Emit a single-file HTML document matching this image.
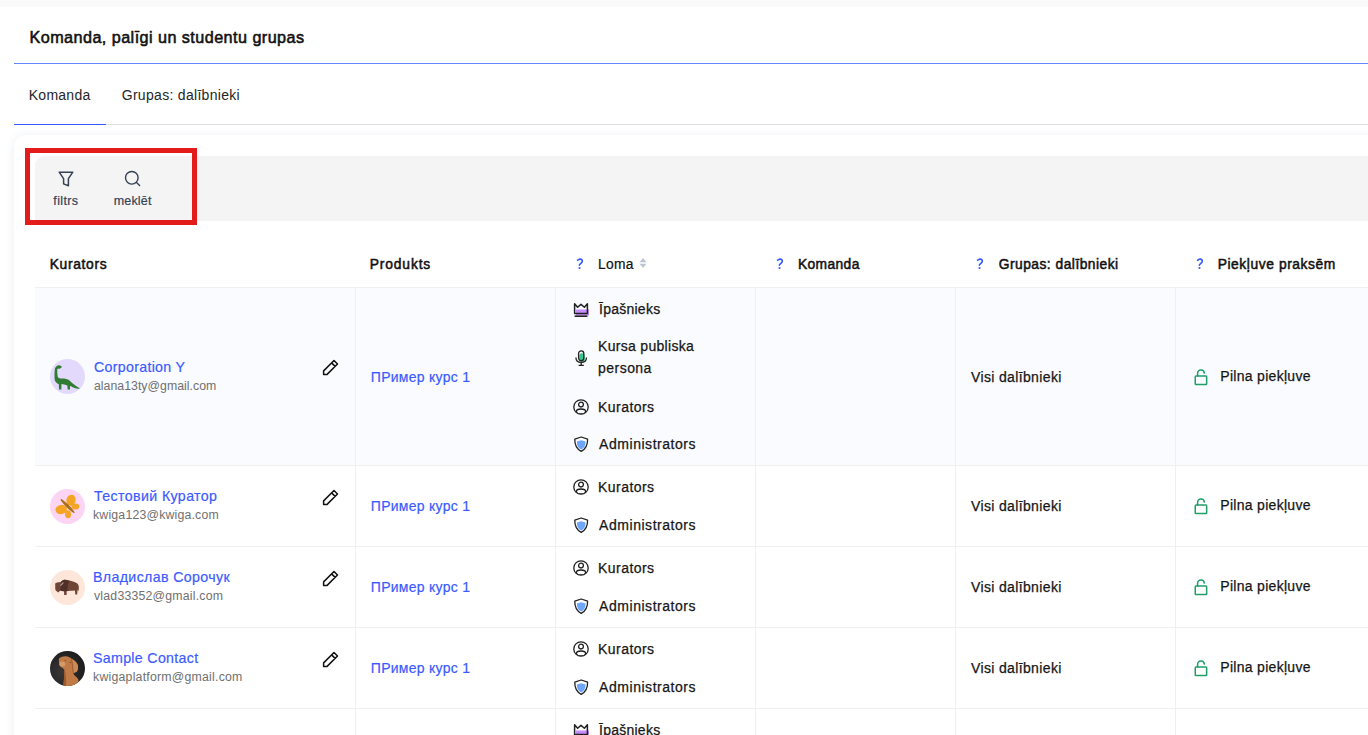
<!DOCTYPE html>
<html><head><meta charset="utf-8"><style>
html,body{margin:0;padding:0;}
body{width:1368px;height:735px;overflow:hidden;position:relative;background:#fff;font-family:"Liberation Sans",sans-serif;}
.t{position:absolute;white-space:nowrap;}
.r{position:absolute;}
.i{position:absolute;overflow:visible;}
.card{position:absolute;left:14px;top:135px;width:1400px;height:700px;border-radius:12px;background:#fff;box-shadow:0 1px 10px rgba(190,200,220,0.32);}
.toolbar{position:absolute;left:35px;top:156px;width:1400px;height:65px;border-radius:9px 0 0 0;background:#f4f4f4;}
</style></head><body>
<div class="r" style="left:0px;top:0px;width:1368px;height:7px;background:#fafafa"></div>
<div class="t" style="left:29.5px;top:26.60px;font-size:16.2px;line-height:20px;color:#111;font-weight:400;letter-spacing:0.439px;-webkit-text-stroke:0.55px #111;">Komanda, palīgi un studentu grupas</div>
<div class="r" style="left:14px;top:63px;width:1354px;height:1px;background:#6486ff"></div>
<div class="t" style="left:28.75px;top:86.20px;font-size:14px;line-height:18px;color:#262626;font-weight:400;letter-spacing:0.258px;">Komanda</div>
<div class="t" style="left:121.7px;top:86.20px;font-size:14px;line-height:18px;color:#262626;font-weight:400;letter-spacing:0.306px;">Grupas: dalībnieki</div>
<div class="r" style="left:14px;top:124px;width:1354px;height:1px;background:#dedede"></div>
<div class="r" style="left:14px;top:124px;width:92px;height:1px;background:#3358ff"></div>
<div class="card"></div>
<div class="toolbar"></div>
<svg class="i" style="left:56px;top:169px;" width="20" height="20" viewBox="0 0 20 20"><path d="M3.2 3.2 H16.8 L12.4 9.6 V16.8 L7.6 14.9 V9.6 Z" fill="none" stroke="#364152" stroke-width="1.5" stroke-linejoin="round"/></svg>
<div class="t" style="left:53.3px;top:192.50px;font-size:12.5px;line-height:16px;color:#364356;font-weight:400;letter-spacing:0.38px;-webkit-text-stroke:0.2px #364356;">filtrs</div>
<svg class="i" style="left:122px;top:168px;" width="20" height="20" viewBox="0 0 20 20"><circle cx="9.8" cy="9.8" r="6.3" fill="none" stroke="#364152" stroke-width="1.4"/><path d="M14.5 14.6 L17.6 17.6" stroke="#364152" stroke-width="1.4" stroke-linecap="round"/></svg>
<div class="t" style="left:113.7px;top:192.50px;font-size:12.5px;line-height:16px;color:#364356;font-weight:400;letter-spacing:0.18px;-webkit-text-stroke:0.2px #364356;">meklēt</div>
<div class="r" style="left:25px;top:148px;width:172px;height:77px;border:5px solid #e31b1b;box-sizing:border-box"></div>
<div class="t" style="left:49.7px;top:255.80px;font-size:13.8px;line-height:17px;color:#111;font-weight:400;letter-spacing:0.686px;-webkit-text-stroke:0.5px #111;">Kurators</div>
<div class="t" style="left:369.8px;top:255.80px;font-size:13.8px;line-height:17px;color:#111;font-weight:400;letter-spacing:0.857px;-webkit-text-stroke:0.5px #111;">Produkts</div>
<svg class="i" style="left:573.5px;top:256px;" width="14" height="15" viewBox="0 0 14 15"><path d="M3.6 4.4 C4.2 3.4 5 3.1 6 3.1 C7.4 3.1 8.3 4 8.3 5.2 C8.3 6.6 6.8 7.4 6 8.2 C5.6 8.6 5.4 9 5.4 9.3" fill="none" stroke="#3358ff" stroke-width="1.6" stroke-linecap="round"/><circle cx="5.5" cy="12" r="1.05" fill="#3358ff"/></svg>
<div class="t" style="left:598.0px;top:255.80px;font-size:13.8px;line-height:17px;color:#111;font-weight:400;letter-spacing:0.267px;-webkit-text-stroke:0.2px #111;">Loma</div>
<svg class="i" style="left:638px;top:256px;" width="10" height="14" viewBox="0 0 10 14"><path d="M5 2 L8.5 6.3 H1.5 Z" fill="#bcc5d4"/><path d="M5 12 L8.5 7.7 H1.5 Z" fill="#bcc5d4"/></svg>
<svg class="i" style="left:773.5px;top:256px;" width="14" height="15" viewBox="0 0 14 15"><path d="M3.6 4.4 C4.2 3.4 5 3.1 6 3.1 C7.4 3.1 8.3 4 8.3 5.2 C8.3 6.6 6.8 7.4 6 8.2 C5.6 8.6 5.4 9 5.4 9.3" fill="none" stroke="#3358ff" stroke-width="1.6" stroke-linecap="round"/><circle cx="5.5" cy="12" r="1.05" fill="#3358ff"/></svg>
<div class="t" style="left:797.9px;top:255.80px;font-size:13.8px;line-height:17px;color:#111;font-weight:400;letter-spacing:0.4px;-webkit-text-stroke:0.5px #111;">Komanda</div>
<svg class="i" style="left:973.6999999999999px;top:256px;" width="14" height="15" viewBox="0 0 14 15"><path d="M3.6 4.4 C4.2 3.4 5 3.1 6 3.1 C7.4 3.1 8.3 4 8.3 5.2 C8.3 6.6 6.8 7.4 6 8.2 C5.6 8.6 5.4 9 5.4 9.3" fill="none" stroke="#3358ff" stroke-width="1.6" stroke-linecap="round"/><circle cx="5.5" cy="12" r="1.05" fill="#3358ff"/></svg>
<div class="t" style="left:998.7px;top:255.80px;font-size:13.8px;line-height:17px;color:#111;font-weight:400;letter-spacing:0.488px;-webkit-text-stroke:0.5px #111;">Grupas: dalībnieki</div>
<svg class="i" style="left:1193.7px;top:256px;" width="14" height="15" viewBox="0 0 14 15"><path d="M3.6 4.4 C4.2 3.4 5 3.1 6 3.1 C7.4 3.1 8.3 4 8.3 5.2 C8.3 6.6 6.8 7.4 6 8.2 C5.6 8.6 5.4 9 5.4 9.3" fill="none" stroke="#3358ff" stroke-width="1.6" stroke-linecap="round"/><circle cx="5.5" cy="12" r="1.05" fill="#3358ff"/></svg>
<div class="t" style="left:1217.7px;top:255.80px;font-size:13.8px;line-height:17px;color:#111;font-weight:400;letter-spacing:0.58px;-webkit-text-stroke:0.5px #111;">Piekļuve praksēm</div>
<div class="r" style="left:35px;top:287px;width:1333px;height:1px;background:#f0f0f0"></div>
<div class="r" style="left:35px;top:288px;width:1333px;height:177px;background:#fafbfe"></div>
<div class="r" style="left:35px;top:465px;width:1333px;height:1px;background:#f0f0f0"></div>
<div class="r" style="left:35px;top:546px;width:1333px;height:1px;background:#f0f0f0"></div>
<div class="r" style="left:35px;top:627px;width:1333px;height:1px;background:#f0f0f0"></div>
<div class="r" style="left:35px;top:708px;width:1333px;height:1px;background:#f0f0f0"></div>
<div class="r" style="left:35px;top:900px;width:1333px;height:1px;background:#f0f0f0"></div>
<div class="r" style="left:355px;top:288px;width:1px;height:447px;background:#f0f0f0"></div>
<div class="r" style="left:555px;top:288px;width:1px;height:447px;background:#f0f0f0"></div>
<div class="r" style="left:755px;top:288px;width:1px;height:447px;background:#f0f0f0"></div>
<div class="r" style="left:955px;top:288px;width:1px;height:447px;background:#f0f0f0"></div>
<div class="r" style="left:1175px;top:288px;width:1px;height:447px;background:#f0f0f0"></div>
<svg class="i" style="left:50px;top:359.0px;" width="35" height="35" viewBox="0 0 35 35"><circle cx="17.5" cy="17.5" r="17.5" fill="#e3d9fd"/><path d="M8 6.5 C9 5.8 10.3 6.2 10.8 7 L11.8 7.6 L11.5 8.4 C10.8 9.3 9.5 9.6 8 9.8 L7.3 10 C7.2 13 7.4 16 7.8 18 C8.5 19.3 10 19.6 12 19.6 C15 19.6 17.5 20.2 19.5 21.6 C22.5 24.5 26 27.5 30.2 29.5 C27 30 24 29.2 21 27.2 L20 27 L20 30.5 L17.6 30.5 L17.4 26.6 C15.5 25.8 13 25.2 11.4 25 L11.4 30.5 L9 30.5 L8.8 25.3 C6.2 24 4.8 22.5 4.6 20 C4.4 16 4.5 12.5 4.9 9.6 C5.5 7.8 6.8 6.8 8 6.5 Z" fill="#2e7d32"/></svg>
<div class="t" style="left:94.0px;top:357.90px;font-size:14.2px;line-height:18px;color:#3b5bff;font-weight:400;letter-spacing:0.308px;-webkit-text-stroke:0.2px #3b5bff;">Corporation Y</div>
<div class="t" style="left:94.0px;top:378.50px;font-size:12.3px;line-height:15px;color:#707070;font-weight:400;letter-spacing:0.022px;">alana13ty@gmail.com</div>
<svg class="i" style="left:320px;top:357.0px;" width="20" height="20" viewBox="0 0 20 20"><path d="M3.6 17.4 V13.9 L14 3.5 L17.5 7 L7.1 17.4 Z M11.6 5.9 L15.1 9.4" fill="none" stroke="#111" stroke-width="1.5" stroke-linejoin="round"/></svg>
<div class="t" style="left:370.8px;top:367.75px;font-size:14px;line-height:18px;color:#3b5bff;font-weight:400;letter-spacing:0.275px;-webkit-text-stroke:0.2px #3b5bff;">ПРимер курс 1</div>
<div class="t" style="left:971.0px;top:367.70px;font-size:14px;line-height:18px;color:#161616;font-weight:400;letter-spacing:0.357px;-webkit-text-stroke:0.25px #161616;">Visi dalībnieki</div>
<svg class="i" style="left:1193px;top:367.5px;" width="16" height="18" viewBox="0 0 16 18"><rect x="2.25" y="8.1" width="11.4" height="8.45" rx="0.8" fill="none" stroke="#1f9e68" stroke-width="1.5"/><path d="M4.6 8.1 V5.4 A3.35 3.35 0 0 1 11.3 5.1" fill="none" stroke="#1f9e68" stroke-width="1.5" stroke-linecap="round"/></svg>
<div class="t" style="left:1220.3px;top:366.90px;font-size:14px;line-height:18px;color:#161616;font-weight:400;letter-spacing:0.292px;-webkit-text-stroke:0.25px #161616;">Pilna piekļuve</div>
<svg class="i" style="left:573px;top:300.5px;" width="16" height="16" viewBox="0 0 16 16"><rect x="3" y="8.5" width="13" height="6" fill="#c38dfa"/><path d="M1.6 2.8 L4.6 6.3 L8 3.4 L11.4 6.3 L14.4 2.8 V12.6 H1.6 Z" fill="none" stroke="#222" stroke-width="1.5" stroke-linejoin="round"/><path d="M1.6 15.2 H14.4" stroke="#222" stroke-width="1.6"/></svg>
<div class="t" style="left:599.1px;top:299.50px;font-size:14px;line-height:18px;color:#161616;font-weight:400;letter-spacing:0.237px;-webkit-text-stroke:0.25px #161616;">Īpašnieks</div>
<svg class="i" style="left:575px;top:350.2px;" width="13" height="17" viewBox="0 0 13 17"><rect x="4.3" y="3.2" width="5.4" height="9" rx="2.7" fill="#3cc58f"/><rect x="3.6" y="0.9" width="5.2" height="9.8" rx="2.6" fill="none" stroke="#222" stroke-width="1.3"/><path d="M0.9 7.4 C1 11 3 12.4 6.2 12.4 C9.4 12.4 11.4 11 11.5 7.4" fill="none" stroke="#222" stroke-width="1.3"/><path d="M6.2 12.4 V15.3 M3.6 15.3 H8.8" stroke="#222" stroke-width="1.3"/></svg>
<div class="t" style="left:598.1px;top:337.20px;font-size:14px;line-height:18px;color:#161616;font-weight:400;letter-spacing:0.3px;-webkit-text-stroke:0.25px #161616;">Kursa publiska</div>
<div class="t" style="left:598.1px;top:359.20px;font-size:14px;line-height:18px;color:#161616;font-weight:400;letter-spacing:0.45px;-webkit-text-stroke:0.25px #161616;">persona</div>
<svg class="i" style="left:573px;top:399.1px;" width="16" height="16" viewBox="0 0 16 16"><defs><clipPath id="uc"><circle cx="8" cy="8" r="7.2"/></clipPath></defs><circle cx="8" cy="8" r="7.2" fill="none" stroke="#222" stroke-width="1.3"/><circle cx="8" cy="5.6" r="2.4" fill="none" stroke="#222" stroke-width="1.3"/><ellipse cx="8" cy="12.6" rx="4.6" ry="2.6" fill="none" stroke="#222" stroke-width="1.3" clip-path="url(#uc)"/></svg>
<div class="t" style="left:598.1px;top:397.60px;font-size:14px;line-height:18px;color:#161616;font-weight:400;letter-spacing:0.443px;-webkit-text-stroke:0.25px #161616;">Kurators</div>
<svg class="i" style="left:574px;top:436.1px;" width="15" height="17" viewBox="0 0 15 17"><path d="M7.2 1 L13.6 3.2 C13.8 9 11.8 12.8 7.2 15.4 C2.6 12.8 0.6 9 0.8 3.2 Z" fill="#fff" stroke="#222" stroke-width="1.3" stroke-linejoin="round"/><path d="M7.2 4.2 L11.6 5.6 C11.6 9.6 10.2 12 7.2 13.6 C4.2 12 2.8 9.6 2.8 5.6 Z" fill="#6ea6fb"/></svg>
<div class="t" style="left:599.1px;top:434.60px;font-size:14px;line-height:18px;color:#161616;font-weight:400;letter-spacing:0.538px;-webkit-text-stroke:0.25px #161616;">Administrators</div>
<svg class="i" style="left:50px;top:488.5px;" width="35" height="35" viewBox="0 0 35 35"><circle cx="17.5" cy="17.5" r="17.5" fill="#fdd5f4"/><ellipse cx="21" cy="11.2" rx="4.6" ry="5.6" transform="rotate(15 21 11.2)" fill="#f5a524"/><ellipse cx="11.2" cy="20.5" rx="5.8" ry="4.6" transform="rotate(-10 11.2 20.5)" fill="#f5a524"/><ellipse cx="25.3" cy="17.6" rx="4" ry="3" fill="#f5a524"/><ellipse cx="18" cy="25.2" rx="3" ry="4" fill="#f5a524"/><ellipse cx="17.6" cy="17.1" rx="9.8" ry="1.5" transform="rotate(45 17.6 17.1)" fill="#a8701d"/></svg>
<div class="t" style="left:94.0px;top:487.40px;font-size:14.2px;line-height:18px;color:#3b5bff;font-weight:400;letter-spacing:0.387px;-webkit-text-stroke:0.2px #3b5bff;">Тестовий Куратор</div>
<div class="t" style="left:93.0px;top:508.00px;font-size:12.3px;line-height:15px;color:#707070;font-weight:400;letter-spacing:0.188px;">kwiga123@kwiga.com</div>
<svg class="i" style="left:320px;top:486.5px;" width="20" height="20" viewBox="0 0 20 20"><path d="M3.6 17.4 V13.9 L14 3.5 L17.5 7 L7.1 17.4 Z M11.6 5.9 L15.1 9.4" fill="none" stroke="#111" stroke-width="1.5" stroke-linejoin="round"/></svg>
<div class="t" style="left:370.8px;top:497.25px;font-size:14px;line-height:18px;color:#3b5bff;font-weight:400;letter-spacing:0.275px;-webkit-text-stroke:0.2px #3b5bff;">ПРимер курс 1</div>
<div class="t" style="left:971.0px;top:497.20px;font-size:14px;line-height:18px;color:#161616;font-weight:400;letter-spacing:0.357px;-webkit-text-stroke:0.25px #161616;">Visi dalībnieki</div>
<svg class="i" style="left:1193px;top:497.0px;" width="16" height="18" viewBox="0 0 16 18"><rect x="2.25" y="8.1" width="11.4" height="8.45" rx="0.8" fill="none" stroke="#1f9e68" stroke-width="1.5"/><path d="M4.6 8.1 V5.4 A3.35 3.35 0 0 1 11.3 5.1" fill="none" stroke="#1f9e68" stroke-width="1.5" stroke-linecap="round"/></svg>
<div class="t" style="left:1220.3px;top:496.40px;font-size:14px;line-height:18px;color:#161616;font-weight:400;letter-spacing:0.292px;-webkit-text-stroke:0.25px #161616;">Pilna piekļuve</div>
<svg class="i" style="left:573px;top:479.4px;" width="16" height="16" viewBox="0 0 16 16"><defs><clipPath id="uc"><circle cx="8" cy="8" r="7.2"/></clipPath></defs><circle cx="8" cy="8" r="7.2" fill="none" stroke="#222" stroke-width="1.3"/><circle cx="8" cy="5.6" r="2.4" fill="none" stroke="#222" stroke-width="1.3"/><ellipse cx="8" cy="12.6" rx="4.6" ry="2.6" fill="none" stroke="#222" stroke-width="1.3" clip-path="url(#uc)"/></svg>
<div class="t" style="left:598.1px;top:477.90px;font-size:14px;line-height:18px;color:#161616;font-weight:400;letter-spacing:0.443px;-webkit-text-stroke:0.25px #161616;">Kurators</div>
<svg class="i" style="left:574px;top:517.4px;" width="15" height="17" viewBox="0 0 15 17"><path d="M7.2 1 L13.6 3.2 C13.8 9 11.8 12.8 7.2 15.4 C2.6 12.8 0.6 9 0.8 3.2 Z" fill="#fff" stroke="#222" stroke-width="1.3" stroke-linejoin="round"/><path d="M7.2 4.2 L11.6 5.6 C11.6 9.6 10.2 12 7.2 13.6 C4.2 12 2.8 9.6 2.8 5.6 Z" fill="#6ea6fb"/></svg>
<div class="t" style="left:599.1px;top:515.90px;font-size:14px;line-height:18px;color:#161616;font-weight:400;letter-spacing:0.538px;-webkit-text-stroke:0.25px #161616;">Administrators</div>
<svg class="i" style="left:50px;top:569.5px;" width="35" height="35" viewBox="0 0 35 35"><circle cx="17.5" cy="17.5" r="17.5" fill="#fee7da"/><path d="M5.2 13.5 C6.5 12.2 8.5 12 10.5 12.2 C12 10.5 13.5 9.6 15 9.8 C19 10.5 24 11.5 27 13.2 C28.5 14.2 28.9 16 28.8 18 L28.6 21.2 L27.6 19.8 L27.2 24.5 L25.3 24.5 L24.9 20.6 C22 20.9 19 21 16.7 21.2 L16.6 25 L14.2 25 L14 21.2 C12.5 21 11.2 20.8 10.2 20.5 L8.3 22.4 C7 21.5 5.5 20.5 5.3 19.5 Z" fill="#6f4536"/><path d="M10.5 12.2 C12 10.5 13.5 9.6 15 9.8 C17 10.1 18.5 10.6 19.5 11 C17.8 13.5 17.2 17 17.6 21.1 C16.5 21.2 15 21.2 14 21.2 C12.5 21 11.2 20.8 10.2 20.5 C10.8 17.5 11 14.5 10.5 12.2 Z" fill="#4f3028"/><path d="M10.8 15.2 L13 13" stroke="#a3918c" stroke-width="1.3" stroke-linecap="round"/></svg>
<div class="t" style="left:93.0px;top:568.40px;font-size:14.2px;line-height:18px;color:#3b5bff;font-weight:400;letter-spacing:0.363px;-webkit-text-stroke:0.2px #3b5bff;">Владислав Сорочук</div>
<div class="t" style="left:94.0px;top:589.00px;font-size:12.3px;line-height:15px;color:#707070;font-weight:400;letter-spacing:0.206px;">vlad33352@gmail.com</div>
<svg class="i" style="left:320px;top:567.5px;" width="20" height="20" viewBox="0 0 20 20"><path d="M3.6 17.4 V13.9 L14 3.5 L17.5 7 L7.1 17.4 Z M11.6 5.9 L15.1 9.4" fill="none" stroke="#111" stroke-width="1.5" stroke-linejoin="round"/></svg>
<div class="t" style="left:370.8px;top:578.25px;font-size:14px;line-height:18px;color:#3b5bff;font-weight:400;letter-spacing:0.275px;-webkit-text-stroke:0.2px #3b5bff;">ПРимер курс 1</div>
<div class="t" style="left:971.0px;top:578.20px;font-size:14px;line-height:18px;color:#161616;font-weight:400;letter-spacing:0.357px;-webkit-text-stroke:0.25px #161616;">Visi dalībnieki</div>
<svg class="i" style="left:1193px;top:578.0px;" width="16" height="18" viewBox="0 0 16 18"><rect x="2.25" y="8.1" width="11.4" height="8.45" rx="0.8" fill="none" stroke="#1f9e68" stroke-width="1.5"/><path d="M4.6 8.1 V5.4 A3.35 3.35 0 0 1 11.3 5.1" fill="none" stroke="#1f9e68" stroke-width="1.5" stroke-linecap="round"/></svg>
<div class="t" style="left:1220.3px;top:577.40px;font-size:14px;line-height:18px;color:#161616;font-weight:400;letter-spacing:0.292px;-webkit-text-stroke:0.25px #161616;">Pilna piekļuve</div>
<svg class="i" style="left:573px;top:560.4px;" width="16" height="16" viewBox="0 0 16 16"><defs><clipPath id="uc"><circle cx="8" cy="8" r="7.2"/></clipPath></defs><circle cx="8" cy="8" r="7.2" fill="none" stroke="#222" stroke-width="1.3"/><circle cx="8" cy="5.6" r="2.4" fill="none" stroke="#222" stroke-width="1.3"/><ellipse cx="8" cy="12.6" rx="4.6" ry="2.6" fill="none" stroke="#222" stroke-width="1.3" clip-path="url(#uc)"/></svg>
<div class="t" style="left:598.1px;top:558.90px;font-size:14px;line-height:18px;color:#161616;font-weight:400;letter-spacing:0.443px;-webkit-text-stroke:0.25px #161616;">Kurators</div>
<svg class="i" style="left:574px;top:598.4px;" width="15" height="17" viewBox="0 0 15 17"><path d="M7.2 1 L13.6 3.2 C13.8 9 11.8 12.8 7.2 15.4 C2.6 12.8 0.6 9 0.8 3.2 Z" fill="#fff" stroke="#222" stroke-width="1.3" stroke-linejoin="round"/><path d="M7.2 4.2 L11.6 5.6 C11.6 9.6 10.2 12 7.2 13.6 C4.2 12 2.8 9.6 2.8 5.6 Z" fill="#6ea6fb"/></svg>
<div class="t" style="left:599.1px;top:596.90px;font-size:14px;line-height:18px;color:#161616;font-weight:400;letter-spacing:0.538px;-webkit-text-stroke:0.25px #161616;">Administrators</div>
<svg class="i" style="left:50px;top:650.5px;" width="35" height="35" viewBox="0 0 35 35"><defs><clipPath id="dc"><circle cx="17.5" cy="17.5" r="17.5"/></clipPath><radialGradient id="dg" cx="0.35" cy="0.6" r="0.65"><stop offset="0" stop-color="#383637"/><stop offset="1" stop-color="#1e1d1e"/></radialGradient></defs><circle cx="17.5" cy="17.5" r="17.5" fill="url(#dg)"/><g clip-path="url(#dc)"><path d="M9 7.6 C11 5.8 13.5 5 15.7 5.2 C18 5.4 20 6.3 21.4 7.6 C25 9.5 28 12.5 28.1 15.5 C28.2 18 27.5 20 26.5 20.8 C25.5 21.5 24 21.8 23.3 21.9 C23.8 23.5 24.5 24.5 25.7 25.4 C27 26.5 28.3 27.8 28.6 29 L27 36 L13.3 36 C13.8 30 14.4 24 14.3 18.5 C13.5 17.8 12.5 17.3 11.9 16.6 C10.5 15.8 9.6 14.8 9.5 13.8 C9 11.5 8.7 9.5 9 7.6 Z" fill="#bf7a45"/><path d="M21.6 8.2 C25 10 27.8 12.8 28 15.5 C28.1 18 27.4 19.9 26.4 20.7 C25.4 21.4 24 21.8 23.3 21.9 C22.8 17 22.4 12 21.6 8.2 Z" fill="#cc8a57"/><path d="M21.6 8.2 C22.4 12 22.8 17 23.3 21.9" stroke="#8f532a" stroke-width="0.8" fill="none"/><path d="M14.3 18.5 C15.5 21 16.5 26 16 36 L13.3 36 C13.8 30 14.4 24 14.3 18.5 Z" fill="#9a5b2f"/><ellipse cx="12.3" cy="13" rx="3" ry="2.6" fill="#d69a68"/><circle cx="15.2" cy="9.6" r="0.7" fill="#6b4425"/><circle cx="20.2" cy="11.4" r="0.7" fill="#6b4425"/></g></svg>
<div class="t" style="left:93.0px;top:649.40px;font-size:14.2px;line-height:18px;color:#3b5bff;font-weight:400;letter-spacing:0.323px;-webkit-text-stroke:0.2px #3b5bff;">Sample Contact</div>
<div class="t" style="left:93.0px;top:670.00px;font-size:12.3px;line-height:15px;color:#707070;font-weight:400;letter-spacing:0.227px;">kwigaplatform@gmail.com</div>
<svg class="i" style="left:320px;top:648.5px;" width="20" height="20" viewBox="0 0 20 20"><path d="M3.6 17.4 V13.9 L14 3.5 L17.5 7 L7.1 17.4 Z M11.6 5.9 L15.1 9.4" fill="none" stroke="#111" stroke-width="1.5" stroke-linejoin="round"/></svg>
<div class="t" style="left:370.8px;top:659.25px;font-size:14px;line-height:18px;color:#3b5bff;font-weight:400;letter-spacing:0.275px;-webkit-text-stroke:0.2px #3b5bff;">ПРимер курс 1</div>
<div class="t" style="left:971.0px;top:659.20px;font-size:14px;line-height:18px;color:#161616;font-weight:400;letter-spacing:0.357px;-webkit-text-stroke:0.25px #161616;">Visi dalībnieki</div>
<svg class="i" style="left:1193px;top:659.0px;" width="16" height="18" viewBox="0 0 16 18"><rect x="2.25" y="8.1" width="11.4" height="8.45" rx="0.8" fill="none" stroke="#1f9e68" stroke-width="1.5"/><path d="M4.6 8.1 V5.4 A3.35 3.35 0 0 1 11.3 5.1" fill="none" stroke="#1f9e68" stroke-width="1.5" stroke-linecap="round"/></svg>
<div class="t" style="left:1220.3px;top:658.40px;font-size:14px;line-height:18px;color:#161616;font-weight:400;letter-spacing:0.292px;-webkit-text-stroke:0.25px #161616;">Pilna piekļuve</div>
<svg class="i" style="left:573px;top:641.4px;" width="16" height="16" viewBox="0 0 16 16"><defs><clipPath id="uc"><circle cx="8" cy="8" r="7.2"/></clipPath></defs><circle cx="8" cy="8" r="7.2" fill="none" stroke="#222" stroke-width="1.3"/><circle cx="8" cy="5.6" r="2.4" fill="none" stroke="#222" stroke-width="1.3"/><ellipse cx="8" cy="12.6" rx="4.6" ry="2.6" fill="none" stroke="#222" stroke-width="1.3" clip-path="url(#uc)"/></svg>
<div class="t" style="left:598.1px;top:639.90px;font-size:14px;line-height:18px;color:#161616;font-weight:400;letter-spacing:0.443px;-webkit-text-stroke:0.25px #161616;">Kurators</div>
<svg class="i" style="left:574px;top:679.4px;" width="15" height="17" viewBox="0 0 15 17"><path d="M7.2 1 L13.6 3.2 C13.8 9 11.8 12.8 7.2 15.4 C2.6 12.8 0.6 9 0.8 3.2 Z" fill="#fff" stroke="#222" stroke-width="1.3" stroke-linejoin="round"/><path d="M7.2 4.2 L11.6 5.6 C11.6 9.6 10.2 12 7.2 13.6 C4.2 12 2.8 9.6 2.8 5.6 Z" fill="#6ea6fb"/></svg>
<div class="t" style="left:599.1px;top:677.90px;font-size:14px;line-height:18px;color:#161616;font-weight:400;letter-spacing:0.538px;-webkit-text-stroke:0.25px #161616;">Administrators</div>
<svg class="i" style="left:573px;top:721.5px;" width="16" height="16" viewBox="0 0 16 16"><rect x="3" y="8.5" width="13" height="6" fill="#c38dfa"/><path d="M1.6 2.8 L4.6 6.3 L8 3.4 L11.4 6.3 L14.4 2.8 V12.6 H1.6 Z" fill="none" stroke="#222" stroke-width="1.5" stroke-linejoin="round"/><path d="M1.6 15.2 H14.4" stroke="#222" stroke-width="1.6"/></svg>
<div class="t" style="left:599.1px;top:720.50px;font-size:14px;line-height:18px;color:#161616;font-weight:400;letter-spacing:0.237px;-webkit-text-stroke:0.25px #161616;">Īpašnieks</div>
</body></html>
